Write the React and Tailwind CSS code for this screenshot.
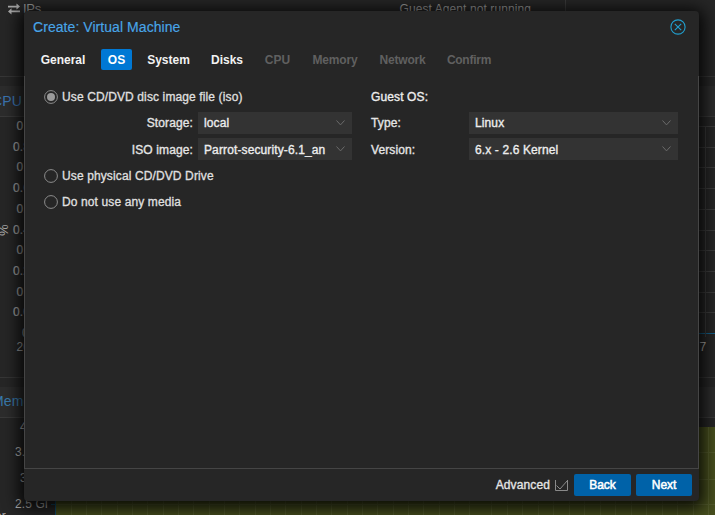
import React from "react";

const TABS = [
  { label: "General", cls: "w-[60px] text-[#f2f2f2]" },
  { label: "OS", cls: "w-[31px] ml-2 bg-[#0078d4] text-white rounded-[2px]" },
  { label: "System", cls: "w-[57px] ml-2 text-[#f2f2f2]" },
  { label: "Disks", cls: "w-[46px] ml-[7px] text-[#f2f2f2]" },
  { label: "CPU", cls: "w-[41px] ml-[7px] text-[#606060]" },
  { label: "Memory", cls: "w-[60px] ml-[7px] text-[#606060] tracking-[-0.2px]" },
  { label: "Network", cls: "w-[61px] ml-[7px] text-[#606060] tracking-[-0.2px]" },
  { label: "Confirm", cls: "w-[60px] ml-[6px] text-[#606060] tracking-[-0.25px]" },
];

const CPU_TICKS = [
  { y: 126, x: 16.5, label: "0.9" },
  { y: 147, x: 13, label: "0.8" },
  { y: 167, x: 16.5, label: "0.7" },
  { y: 188, x: 13, label: "0.6" },
  { y: 209, x: 16.5, label: "0.5" },
  { y: 230, x: 13, label: "0.4" },
  { y: 250, x: 16.5, label: "0.3" },
  { y: 271, x: 13, label: "0.2" },
  { y: 292, x: 16.5, label: "0.1" },
  { y: 312, x: 13, label: "0.0" },
  { y: 333, x: 22, label: "0" },
];

const MEM_TICKS = [
  { y: 427, x: 20, label: "4 Gi" },
  { y: 452, x: 15, label: "3.5 Gi" },
  { y: 478, x: 20, label: "3 Gi" },
  { y: 504, x: 15, label: "2.5 Gi" },
];

const GRID_X = [71, 86, 101, 117, 132, 147, 163, 178, 193, 209, 224, 239, 255, 270, 285, 301, 316, 331, 347, 362, 377, 393, 408, 423, 439, 454, 469, 491, 507, 522, 538, 553, 569, 584, 600, 615, 631, 646, 662, 677, 693, 708];

function Dropdown({ value, className }) {
  return (
    <div className={`flex h-[22px] items-center justify-between overflow-hidden bg-[#333333] pr-[7px] pl-[6px] text-[#ededed] ${className}`}>
      <span className="whitespace-nowrap">{value}</span>
      <svg width="9" height="6" viewBox="0 0 9 6" className="mb-px shrink-0" fill="none" stroke="#6b6b6b" strokeWidth="1">
        <path d="M.5.5 4.5 4.9 8.5.5" />
      </svg>
    </div>
  );
}

function Radio({ checked, children, className = "" }) {
  return (
    <div className={`flex h-4 items-center gap-[4px] text-[#dfdfdf] ${className}`}>
      <svg width="14" height="14" viewBox="0 0 14 14" className="shrink-0">
        <circle cx="7" cy="7" r="6.4" fill="none" stroke="#8d8d8d" strokeWidth="1" />
        {checked && <circle cx="7" cy="7" r="4" fill="#9a9a9a" />}
      </svg>
      <span className="whitespace-nowrap">{children}</span>
    </div>
  );
}

function Field({ label, value, labelClass, boxClass, rowClass = "" }) {
  return (
    <div className={`flex h-[22px] items-center text-[#e4e4e4] ${rowClass}`}>
      <span className={`shrink-0 whitespace-nowrap ${labelClass}`}>{label}</span>
      <Dropdown value={value} className={boxClass} />
    </div>
  );
}

function Backdrop() {
  return (
    <div className="flex h-full flex-col bg-[#262626]">
      <div className="flex h-[77px] border-b border-[#363636]">
        <div className="flex w-[566px] items-start justify-between border-r border-[#3a3a3a] pr-[34px] pl-2 text-[#9a9a9a]">
          <div className="flex pt-px">
            <svg width="12" height="12" viewBox="0 0 12 12" className="mt-[2px] mr-[3px]" fill="#a8a8a8">
              <path d="M0 2.7h8.5V.4L12 3.6 8.5 6.6V4.5H0zM12 7.5H3.5V5.3L0 8.5 3.5 11.6V9.3H12z" />
            </svg>
            <span className="text-[13px] tracking-[-0.3px]">IPs</span>
          </div>
          <div className="pt-px tracking-[0.09px]">Guest Agent not running</div>
        </div>
      </div>
      <div className="mt-[9px] h-[31px] border-b border-[#393939] bg-[#2c2c2c] pt-[5px] text-[14px] leading-5 text-[#3b74b0]">
        <span className="-ml-[8px]">CPU</span>
      </div>
      <svg className="h-[261px] w-full shrink-0" viewBox="0 117 715 261">
        {CPU_TICKS.map((t) => (
          <g key={t.y}>
            <path d={`M55 ${t.y + 0.5}H715`} stroke={t.y === 333 ? "#14608a" : "#3c3c3c"} />
            <text x={t.x} y={t.y + 4} fill="#a0a0a0" stroke="#a0a0a0" strokeWidth="0.2">{t.label}</text>
          </g>
        ))}
        <path d="M705.5 126V337" stroke="#3a3a3a" />
        <text x="16.5" y="351" fill="#a0a0a0">2024</text>
        <text x="699.5" y="351" fill="#b0b0b0">7</text>
        <text transform="rotate(-90 8 236)" x="8" y="236" fill="#aaaaaa" className="text-[13px]">%</text>
        <path d="M0 377.5H715" stroke="#363636" />
      </svg>
      <div className="mt-[9px] h-[31px] shrink-0 border-b border-[#393939] bg-[#2c2c2c] pt-1 text-[14px] leading-5 text-[#397bad]">
        <span className="-ml-[8px]">Memory</span>
      </div>
      <svg className="h-[97px] w-full shrink-0" viewBox="0 418 715 97">
        <rect x="55" y="427" width="660" height="88" fill="#474f1e" />
        {GRID_X.map((x) => <path key={x} d={`M${x + 0.5} 427V515`} stroke="#535b2c" />)}
        <path d="M55 452.5H715M55 479.5H715M55 504.5H715" stroke="#535b2c" />
        <path d="M55.5 427V515M51 504.5H55" stroke="#14506f" />
        {MEM_TICKS.map((t) => <text key={t.y} x={t.x} y={t.y + 4} fill="#b8b8b8">{t.label}</text>)}
        <text x="-5" y="520" fill="#aaaaaa">er</text>
      </svg>
    </div>
  );
}

function Wizard() {
  return (
    <div className="absolute top-[11px] left-6 flex h-[490px] w-[675px] flex-col rounded-[4px] bg-[#262626] shadow-[0_3px_16px_5px_rgba(0,0,0,0.85)] [-webkit-text-stroke:0.35px]">
      <div className="flex h-[32px] items-center justify-between pr-[13px] pl-[9px] text-[#48a5e8]">
        <span className="text-[14px] tracking-[0.06px] [-webkit-text-stroke:0.15px]">Create: Virtual Machine</span>
        <svg width="16" height="16" viewBox="0 0 16 16" fill="none" stroke="#219fce" strokeWidth="1.1">
          <circle cx="8" cy="8" r="7.1" />
          <path d="M4.8 4.8 11.2 11.2M11.2 4.8 4.8 11.2" />
        </svg>
      </div>
      <nav className="flex h-[33px] items-start pt-[6px] pl-[9px] tracking-normal [-webkit-text-stroke:0px]">
        {TABS.map((t) => (
          <div key={t.label} className={`flex h-[21px] items-center justify-center font-bold ${t.cls}`}>
            {t.label}
          </div>
        ))}
      </nav>
      <main className="flex h-[393px] items-start border-r border-b border-l border-[#454545]">
        <div className="w-[346px] pt-[13px] pl-[19px]">
          <Radio checked>Use CD/DVD disc image file (iso)</Radio>
          <div className="mt-[7px] flex flex-col gap-1">
            <Field label="Storage:" value="local" labelClass="w-[154px] pr-[5px] text-right" boxClass="w-[154px]" />
            <Field label="ISO image:" value="Parrot-security-6.1_an" rowClass="[&_span]:pt-px" labelClass="w-[154px] pr-[5px] text-right" boxClass="w-[154px]" />
          </div>
          <Radio className="mt-2">Use physical CD/DVD Drive</Radio>
          <Radio className="mt-[10px]">Do not use any media</Radio>
        </div>
        <div className="pt-[13px] text-[#ededed]">
          <div className="h-4 leading-4">Guest OS:</div>
          <div className="mt-[7px] flex flex-col gap-1">
            <Field label="Type:" value="Linux" labelClass="w-[98px]" boxClass="w-[209px]" />
            <Field label="Version:" value="6.x - 2.6 Kernel" rowClass="[&_span]:pt-px" labelClass="w-[98px]" boxClass="w-[209px]" />
          </div>
        </div>
      </main>
      <footer className="flex h-[32px] items-center justify-end pr-[7px] text-[#e4e4e4]">
        <span>Advanced</span>
        <svg width="13" height="11" viewBox="0 0 13 11" className="mr-[6px] ml-[5px]" fill="none" stroke="#8a8a8a">
          <path d="M.5 0V10.5H12.5V0M1.5 5.5l3.5 3.5L12 1" />
        </svg>
        <button className="mr-[5px] h-[22px] w-[57px] rounded-[2px] bg-[#0062a8] tracking-[-0.1px] text-white [-webkit-text-stroke:0.5px]">Back</button>
        <button className="h-[22px] w-[56px] rounded-[2px] bg-[#0062a8] tracking-[-0.1px] text-white [-webkit-text-stroke:0.5px]">Next</button>
      </footer>
    </div>
  );
}

export default function App() {
  return (
    <div className="relative h-[515px] w-[715px] overflow-hidden font-['Liberation_Sans',Arial,sans-serif] text-[12px] leading-4 tracking-[0.12px]">
      <Backdrop />
      <Wizard />
    </div>
  );
}
